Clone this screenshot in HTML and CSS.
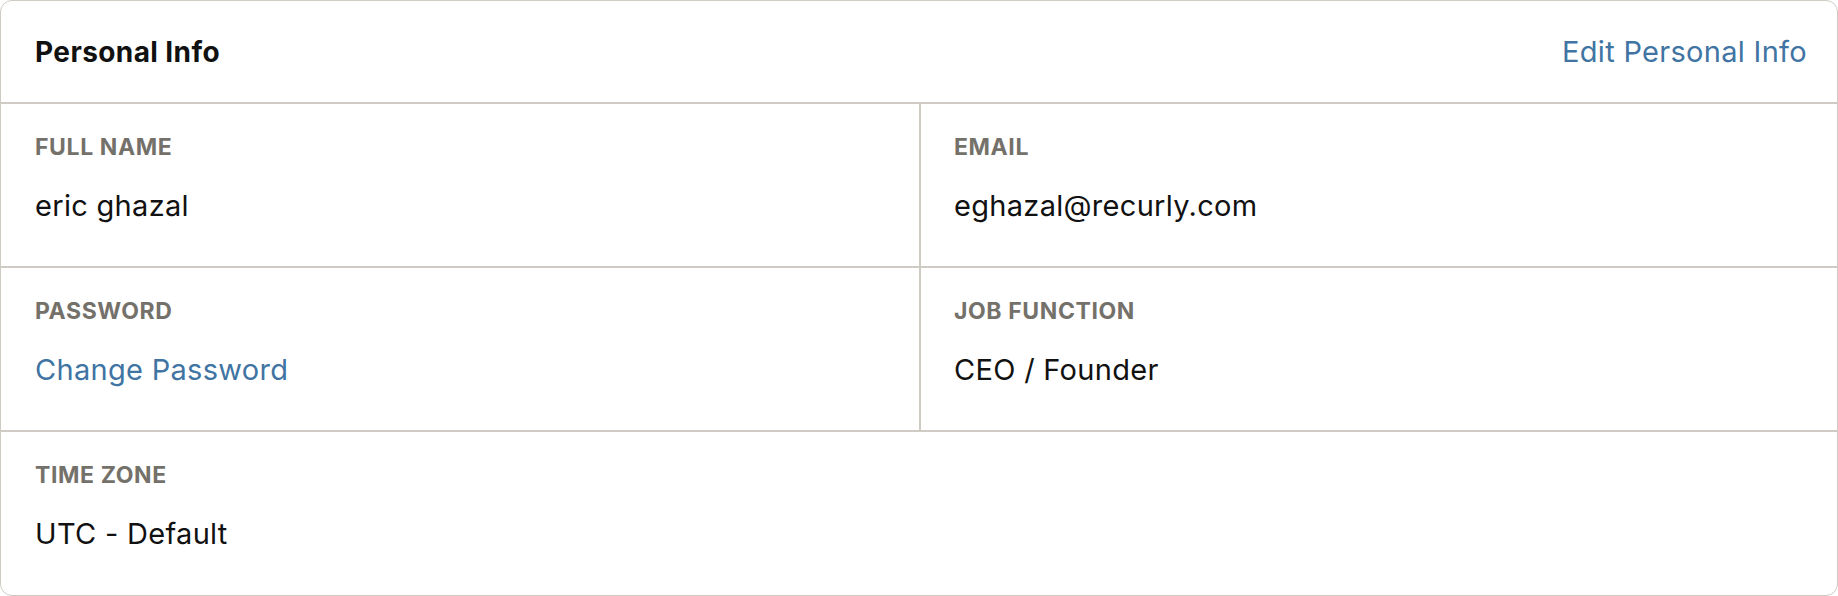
FILE: index.html
```html
<!DOCTYPE html>
<html>
<head>
<meta charset="utf-8">
<link rel="stylesheet" href="styles.css">
</head>
<body>
<section class="card">
  <header class="card-header">
    <h2 class="title">Personal Info</h2>
    <a class="link edit" href="#">Edit Personal Info</a>
  </header>
  <div class="row">
    <div class="cell">
      <div class="label">FULL NAME</div>
      <div class="value">eric ghazal</div>
    </div>
    <div class="cell divided">
      <div class="label">EMAIL</div>
      <div class="value">eghazal@recurly.com</div>
    </div>
  </div>
  <div class="row">
    <div class="cell">
      <div class="label">PASSWORD</div>
      <div class="value"><a class="link" href="#">Change Password</a></div>
    </div>
    <div class="cell divided">
      <div class="label">JOB FUNCTION</div>
      <div class="value">CEO / Founder</div>
    </div>
  </div>
  <div class="row single">
    <div class="cell">
      <div class="label">TIME ZONE</div>
      <div class="value">UTC - Default</div>
    </div>
  </div>
</section>
</body>
</html>
```
FILE: styles.css
```css
* { box-sizing: border-box; }
html, body { margin: 0; padding: 0; background: #ffffff; }
body {
  font-family: Inter, "Noto Sans", sans-serif;
  color: #111111;
}
.card {
  width: 1838px;
  height: 596px;
  border: 1px solid #cfcbc4;
  border-radius: 12px;
  background: #fff;
  overflow: hidden;
  display: flex;
  flex-direction: column;
}
.card-header {
  height: 103px;
  display: flex;
  align-items: center;
  justify-content: space-between;
  padding: 0 30px 0 34px;
  border-bottom: 2px solid #cfcbc4;
}
.title {
  margin: 0;
  font-size: 28px;
  font-weight: 700;
  letter-spacing: 0.4px;
  color: #111;
}
.link {
  color: #3f74a3;
  text-decoration: none;
  font-size: 29px;
  letter-spacing: 0.3px;
}
.row {
  height: 164px;
  display: grid;
  grid-template-columns: 1fr 1fr;
  border-bottom: 2px solid #cfcbc4;
}
.row.single { grid-template-columns: 1fr; border-bottom: none; flex: 1; }
.cell {
  padding: 29px 34px 0;
}
.divided { border-left: 2px solid #cfcbc4; padding-left: 33px; }
.label {
  font-size: 23px;
  font-weight: 700;
  color: #74716a;
  line-height: 28px;
  letter-spacing: 0.6px;
}
.value {
  margin-top: 27px;
  font-size: 29px;
  line-height: 36px;
  letter-spacing: 0.3px;
  color: #111;
}
.value .link { font-size: inherit; }
```
